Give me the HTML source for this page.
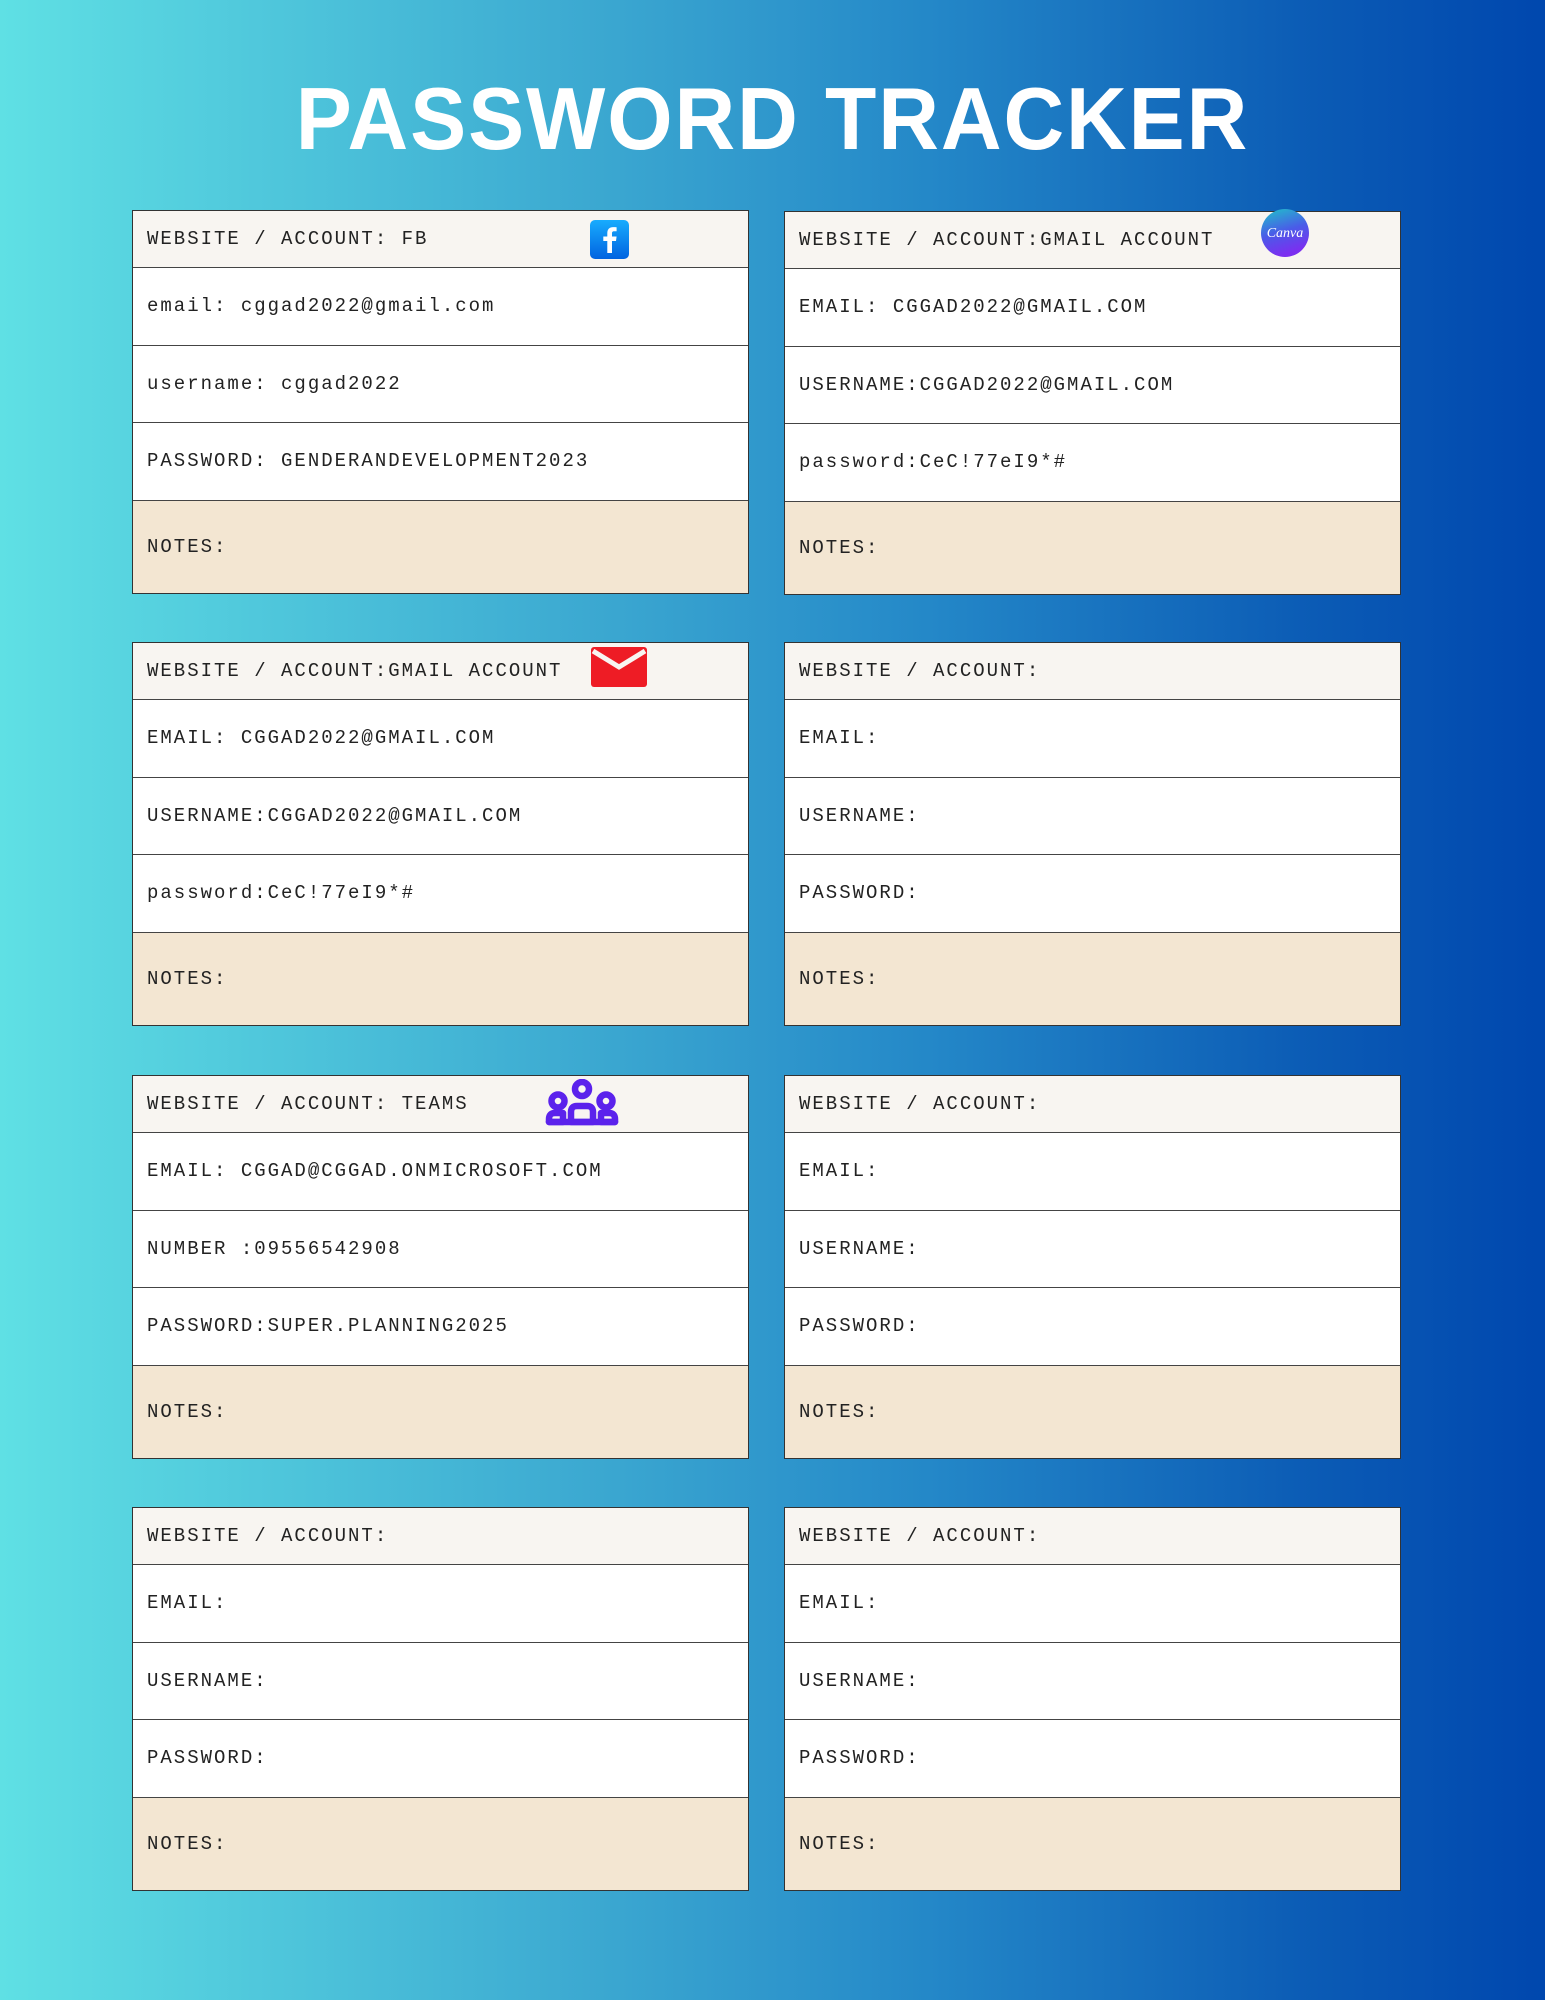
<!DOCTYPE html>
<html><head><meta charset="utf-8"><style>
*{margin:0;padding:0;box-sizing:border-box}
body{width:1545px;height:2000px;background:linear-gradient(90deg,#5fe0e4 0%,#3aa6d0 40%,#2488c8 60%,#0b5bb5 85%,#0047ae 100%);position:relative;overflow:hidden;font-family:"Liberation Mono",monospace}
h1{position:absolute;top:68px;left:0;width:1545px;text-align:center;color:#fff;font-family:"Liberation Sans",sans-serif;font-weight:bold;font-size:88px;letter-spacing:2px;transform:scaleX(0.955)}
.card{position:absolute;width:617px;border:1.5px solid #333;background:#fff}
.r{height:77.5px;border-top:1.5px solid #444;display:flex;align-items:center;padding-left:14px;font-size:19px;letter-spacing:2px;color:#222;position:relative}
.r.h{height:56px;border-top:none;background:#f8f5f1}
.r.n{height:93px;background:#f3e6d2}
.ic{position:absolute;letter-spacing:0}
</style></head><body>
<h1>PASSWORD TRACKER</h1>

<div class="card" style="left:132px;top:210px">
<div class="r h">WEBSITE / ACCOUNT: FB
<svg class="ic" style="left:457px;top:9px" width="39" height="39" viewBox="0 0 39 39"><defs><linearGradient id="fb" x1="0" y1="0" x2="0" y2="1"><stop offset="0" stop-color="#18acfe"/><stop offset="1" stop-color="#0163e0"/></linearGradient></defs><rect width="39" height="39" rx="5" fill="url(#fb)"/><path d="M22 33V21h4l.6-4.5H22v-3c0-1.3.4-2.2 2.2-2.2h2.4V7.3c-.4-.1-1.8-.2-3.5-.2-3.5 0-5.8 2.1-5.8 6v3.4h-4V21h4v12z" fill="#fff"/></svg></div>
<div class="r">email: cggad2022@gmail.com</div>
<div class="r">username: cggad2022</div>
<div class="r">PASSWORD: GENDERANDEVELOPMENT2023</div>
<div class="r n">NOTES:</div>
</div>

<div class="card" style="left:784px;top:211px">
<div class="r h">WEBSITE / ACCOUNT:GMAIL ACCOUNT
<svg class="ic" style="left:476px;top:-3px" width="48" height="48" viewBox="0 0 48 48"><defs><linearGradient id="cv" x1="0" y1="0" x2="0.3" y2="1"><stop offset="0" stop-color="#1ec3c9"/><stop offset="0.55" stop-color="#4a5be8"/><stop offset="1" stop-color="#7b2ff0"/></linearGradient></defs><circle cx="24" cy="24" r="24" fill="url(#cv)"/><text x="24" y="28" text-anchor="middle" fill="#fff" font-family="Liberation Serif,serif" font-style="italic" font-size="14" letter-spacing="0">Canva</text></svg></div>
<div class="r">EMAIL: CGGAD2022@GMAIL.COM</div>
<div class="r">USERNAME:CGGAD2022@GMAIL.COM</div>
<div class="r">password:CeC!77eI9*#</div>
<div class="r n">NOTES:</div>
</div>

<div class="card" style="left:132px;top:642px">
<div class="r h">WEBSITE / ACCOUNT:GMAIL ACCOUNT
<svg class="ic" style="left:458px;top:4px" width="56" height="40" viewBox="0 0 56 40"><rect x="0" y="0" width="56" height="40" rx="3" fill="#ee1c25"/><path d="M2 4L28 20L54 4" stroke="#f8f5f1" stroke-width="5" fill="none"/></svg></div>
<div class="r">EMAIL: CGGAD2022@GMAIL.COM</div>
<div class="r">USERNAME:CGGAD2022@GMAIL.COM</div>
<div class="r">password:CeC!77eI9*#</div>
<div class="r n">NOTES:</div>
</div>

<div class="card" style="left:784px;top:642px">
<div class="r h">WEBSITE / ACCOUNT:</div>
<div class="r">EMAIL:</div>
<div class="r">USERNAME:</div>
<div class="r">PASSWORD:</div>
<div class="r n">NOTES:</div>
</div>

<div class="card" style="left:132px;top:1075px">
<div class="r h">WEBSITE / ACCOUNT: TEAMS
<svg class="ic" style="left:411px;top:3px" width="76" height="48" viewBox="0 0 76 48" fill="none" stroke="#5b22ec" stroke-width="6.5" stroke-linejoin="round" stroke-linecap="round"><circle cx="38" cy="10" r="7"/><circle cx="14" cy="22" r="6.5"/><circle cx="62" cy="22" r="6.5"/><path d="M27 43V33q0-6 6-6h10q6 0 6 6v10z"/><path d="M5 43v-3q0-6 6-6h8v9zM71 43v-3q0-6-6-6h-8v9z"/><path d="M5 43h66"/></svg></div>
<div class="r">EMAIL: CGGAD@CGGAD.ONMICROSOFT.COM</div>
<div class="r">NUMBER :09556542908</div>
<div class="r">PASSWORD:SUPER.PLANNING2025</div>
<div class="r n">NOTES:</div>
</div>

<div class="card" style="left:784px;top:1075px">
<div class="r h">WEBSITE / ACCOUNT:</div>
<div class="r">EMAIL:</div>
<div class="r">USERNAME:</div>
<div class="r">PASSWORD:</div>
<div class="r n">NOTES:</div>
</div>

<div class="card" style="left:132px;top:1507px">
<div class="r h">WEBSITE / ACCOUNT:</div>
<div class="r">EMAIL:</div>
<div class="r">USERNAME:</div>
<div class="r">PASSWORD:</div>
<div class="r n">NOTES:</div>
</div>

<div class="card" style="left:784px;top:1507px">
<div class="r h">WEBSITE / ACCOUNT:</div>
<div class="r">EMAIL:</div>
<div class="r">USERNAME:</div>
<div class="r">PASSWORD:</div>
<div class="r n">NOTES:</div>
</div>
</body></html>
